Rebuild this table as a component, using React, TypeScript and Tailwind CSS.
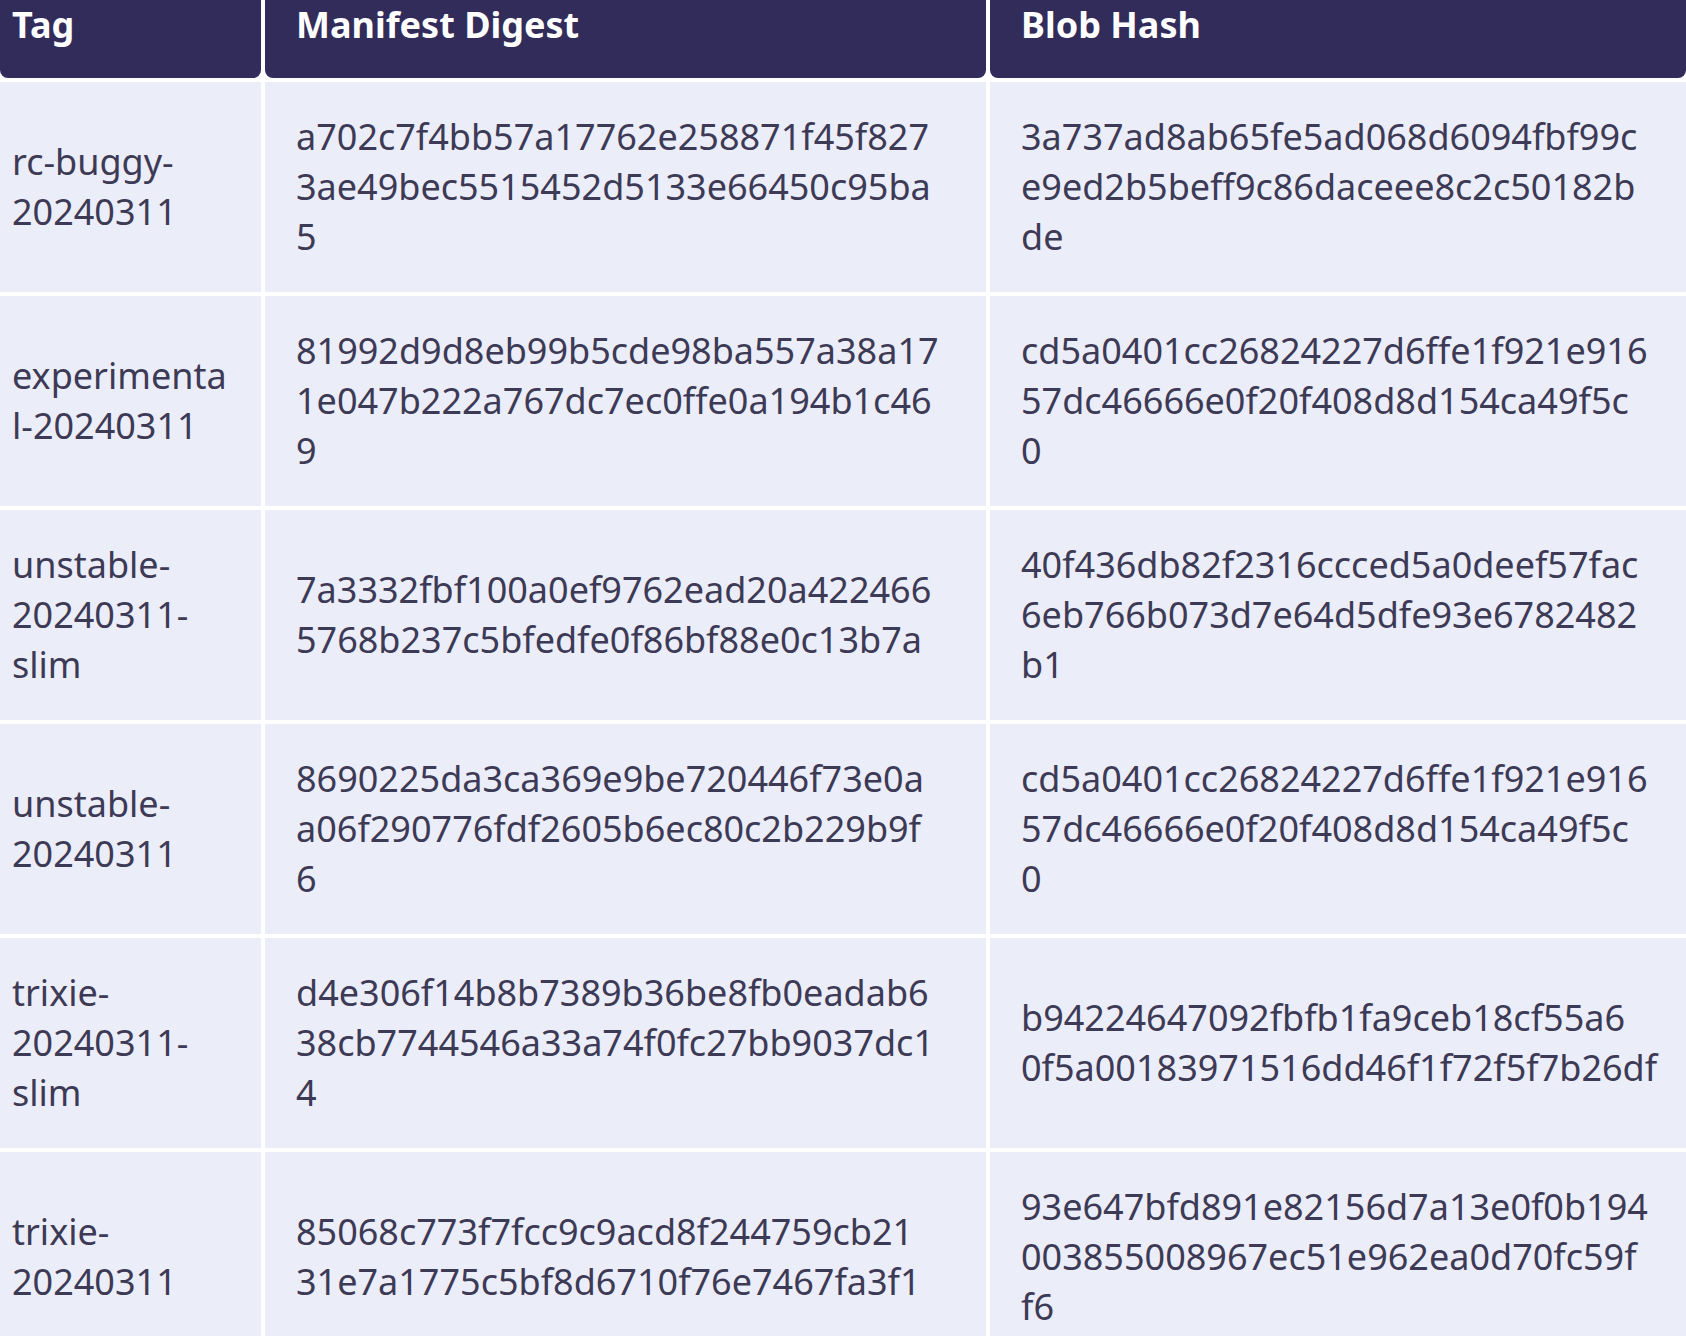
import React from "react";

type Row = { tag: string[]; manifest: string[]; blob: string[] };

const rows: Row[] = [
  {
    tag: ["rc-buggy-", "20240311"],
    manifest: ["a702c7f4bb57a17762e258871f45f827", "3ae49bec5515452d5133e66450c95ba", "5"],
    blob: ["3a737ad8ab65fe5ad068d6094fbf99c", "e9ed2b5beff9c86daceee8c2c50182b", "de"],
  },
  {
    tag: ["experimenta", "l-20240311"],
    manifest: ["81992d9d8eb99b5cde98ba557a38a17", "1e047b222a767dc7ec0ffe0a194b1c46", "9"],
    blob: ["cd5a0401cc26824227d6ffe1f921e916", "57dc46666e0f20f408d8d154ca49f5c", "0"],
  },
  {
    tag: ["unstable-", "20240311-", "slim"],
    manifest: ["7a3332fbf100a0ef9762ead20a422466", "5768b237c5bfedfe0f86bf88e0c13b7a"],
    blob: ["40f436db82f2316ccced5a0deef57fac", "6eb766b073d7e64d5dfe93e6782482", "b1"],
  },
  {
    tag: ["unstable-", "20240311"],
    manifest: ["8690225da3ca369e9be720446f73e0a", "a06f290776fdf2605b6ec80c2b229b9f", "6"],
    blob: ["cd5a0401cc26824227d6ffe1f921e916", "57dc46666e0f20f408d8d154ca49f5c", "0"],
  },
  {
    tag: ["trixie-", "20240311-", "slim"],
    manifest: ["d4e306f14b8b7389b36be8fb0eadab6", "38cb7744546a33a74f0fc27bb9037dc1", "4"],
    blob: ["b94224647092fbfb1fa9ceb18cf55a6", "0f5a00183971516dd46f1f72f5f7b26df"],
  },
  {
    tag: ["trixie-", "20240311"],
    manifest: ["85068c773f7fcc9c9acd8f244759cb21", "31e7a1775c5bf8d6710f76e7467fa3f1"],
    blob: ["93e647bfd891e82156d7a13e0f0b194", "003855008967ec51e962ea0d70fc59f", "f6"],
  },
];

function Lines({ lines }: { lines: string[] }) {
  return (
    <>
      {lines.map((l, i) => (
        <span key={i} className="block whitespace-nowrap">
          {l}
        </span>
      ))}
    </>
  );
}

export default function App() {
  return (
    <div
      className="w-[1686px] h-[1336px] overflow-hidden bg-white text-[36px] leading-[50px]"
      style={{ fontFamily: '"Noto Sans", "Liberation Sans", sans-serif' }}
    >
      <div className="grid grid-cols-[261px_721px_696px] gap-[4px]">
        <div className="h-[78px] bg-[#322c5b] rounded-b-[8px] pl-[12px] font-bold text-white">Tag</div>
        <div className="h-[78px] bg-[#322c5b] rounded-b-[8px] pl-[31px] font-bold text-white">Manifest Digest</div>
        <div className="h-[78px] bg-[#322c5b] rounded-b-[8px] pl-[31px] font-bold text-white">Blob Hash</div>
        {rows.map((r, i) => (
          <React.Fragment key={i}>
            <div className="h-[210px] bg-[#ebedf9] pl-[12px] flex flex-col justify-center text-[#3d3a55]">
              <Lines lines={r.tag} />
            </div>
            <div className="h-[210px] bg-[#ebedf9] pl-[31px] flex flex-col justify-center text-[#3d3a55]">
              <Lines lines={r.manifest} />
            </div>
            <div className="h-[210px] bg-[#ebedf9] pl-[31px] flex flex-col justify-center text-[#3d3a55]">
              <Lines lines={r.blob} />
            </div>
          </React.Fragment>
        ))}
      </div>
    </div>
  );
}
